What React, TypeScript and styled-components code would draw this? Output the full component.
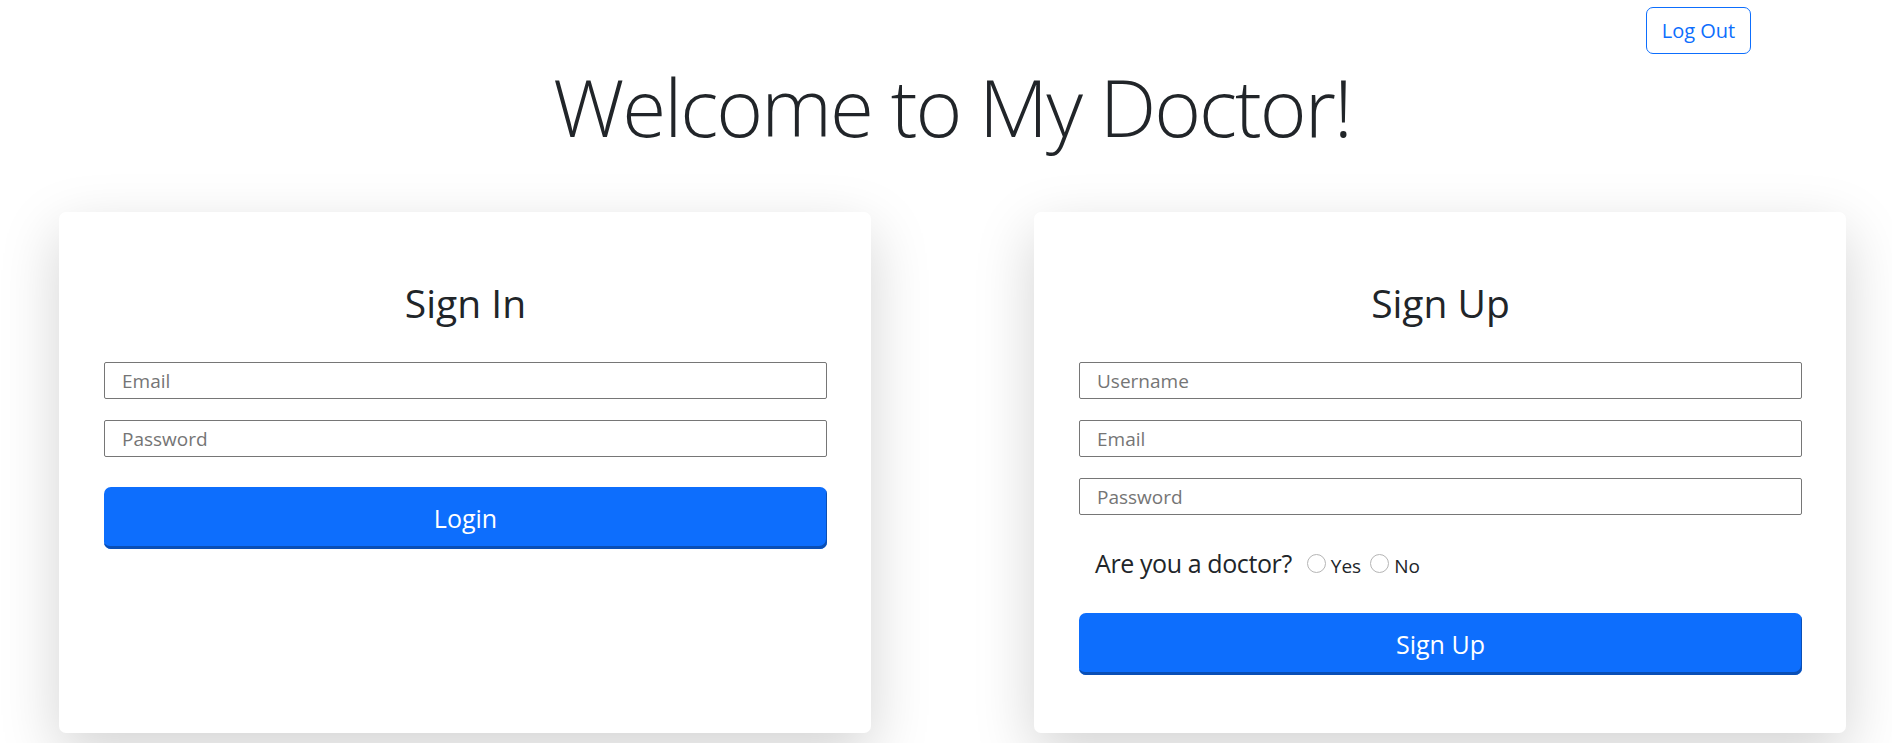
import React from "react";
import styled, { createGlobalStyle } from "styled-components";

const GlobalStyle = createGlobalStyle`
  html, body {
    margin: 0;
    padding: 0;
    background: #ffffff;
  }
  body {
    font-family: "Open Sans", "Noto Sans", "Liberation Sans", sans-serif;
    color: #212529;
  }
  * { box-sizing: border-box; }
`;

const Page = styled.div`
  width: 100%;
  min-height: 743px;
  overflow: hidden;
`;

const TopBar = styled.header`
  display: flex;
  justify-content: flex-end;
  padding: 7px 141px 0 0;
`;

const OutlineButton = styled.button`
  height: 47px;
  width: 105px;
  padding: 0;
  border: 1px solid #0d6efd;
  border-radius: 7px;
  background: transparent;
  color: #0d6efd;
  font-family: inherit;
  font-size: 20px;
  cursor: pointer;
`;

const Title = styled.h1`
  margin: 4px 0 0;
  padding-left: 12px;
  text-align: center;
  font-size: 80px;
  line-height: 96px;
  font-weight: 300;
  letter-spacing: -2px;
  color: #212529;
`;

const CardRow = styled.main`
  display: flex;
  gap: 163px;
  padding: 58px 46px 0 59px;
`;

const Card = styled.section`
  width: 812px;
  height: 521px;
  flex: 0 0 812px;
  background: #ffffff;
  border-radius: 7px;
  box-shadow: 0 20px 60px rgba(0, 0, 0, 0.175);
  padding: 67px 44px 0 45px;
  display: flex;
  flex-direction: column;
`;

const CardTitle = styled.h2`
  margin: 0 0 35px;
  text-align: center;
  font-size: 39px;
  line-height: 48px;
  font-weight: 400;
  color: #212529;
`;

const Form = styled.form`
  display: flex;
  flex-direction: column;
  gap: 21px;
`;

const TextInput = styled.input`
  height: 37px;
  width: 100%;
  border: 1px solid #767676;
  border-radius: 2px;
  padding: 0 17px;
  font-family: inherit;
  font-size: 19px;
  color: #212529;
  outline: none;
  &::placeholder {
    color: #757575;
  }
`;

const PrimaryButton = styled.button<{ $mt: number }>`
  margin-top: ${(p) => p.$mt}px;
  height: 62px;
  width: 100%;
  border: none;
  border-radius: 7px;
  background: #0d6efd;
  box-shadow: inset -1px -3px 0 #0a4fb5;
  color: #ffffff;
  font-family: inherit;
  font-size: 25px;
  cursor: pointer;
`;

const DoctorRow = styled.div`
  margin-top: 9px;
  padding-left: 16px;
  height: 36px;
  display: flex;
  align-items: baseline;
  line-height: 36px;
`;

const Question = styled.span`
  font-size: 25px;
  letter-spacing: -0.4px;
  margin-right: 15px;
`;

const Choice = styled.label`
  display: inline-flex;
  align-items: baseline;
  font-size: 19px;
  margin-right: 9px;
`;

const Radio = styled.input`
  appearance: none;
  -webkit-appearance: none;
  width: 19px;
  height: 19px;
  margin: 0 5px 4px 0;
  border: 1px solid #b5b5b5;
  border-radius: 50%;
  background: #ffffff;
`;

export default function App() {
  return (
    <Page>
      <GlobalStyle />
      <TopBar>
        <OutlineButton type="button">Log Out</OutlineButton>
      </TopBar>
      <Title>Welcome to My Doctor!</Title>
      <CardRow>
        <Card>
          <CardTitle>Sign In</CardTitle>
          <Form onSubmit={(e) => e.preventDefault()}>
            <TextInput type="email" placeholder="Email" />
            <TextInput type="password" placeholder="Password" />
            <PrimaryButton type="submit" $mt={9}>
              Login
            </PrimaryButton>
          </Form>
        </Card>
        <Card>
          <CardTitle>Sign Up</CardTitle>
          <Form onSubmit={(e) => e.preventDefault()}>
            <TextInput type="text" placeholder="Username" />
            <TextInput type="email" placeholder="Email" />
            <TextInput type="password" placeholder="Password" />
            <DoctorRow>
              <Question>Are you a doctor?</Question>
              <Choice>
                <Radio type="radio" name="doctor" value="yes" />
                Yes
              </Choice>
              <Choice>
                <Radio type="radio" name="doctor" value="no" />
                No
              </Choice>
            </DoctorRow>
            <PrimaryButton type="submit" $mt={11}>
              Sign Up
            </PrimaryButton>
          </Form>
        </Card>
      </CardRow>
    </Page>
  );
}
